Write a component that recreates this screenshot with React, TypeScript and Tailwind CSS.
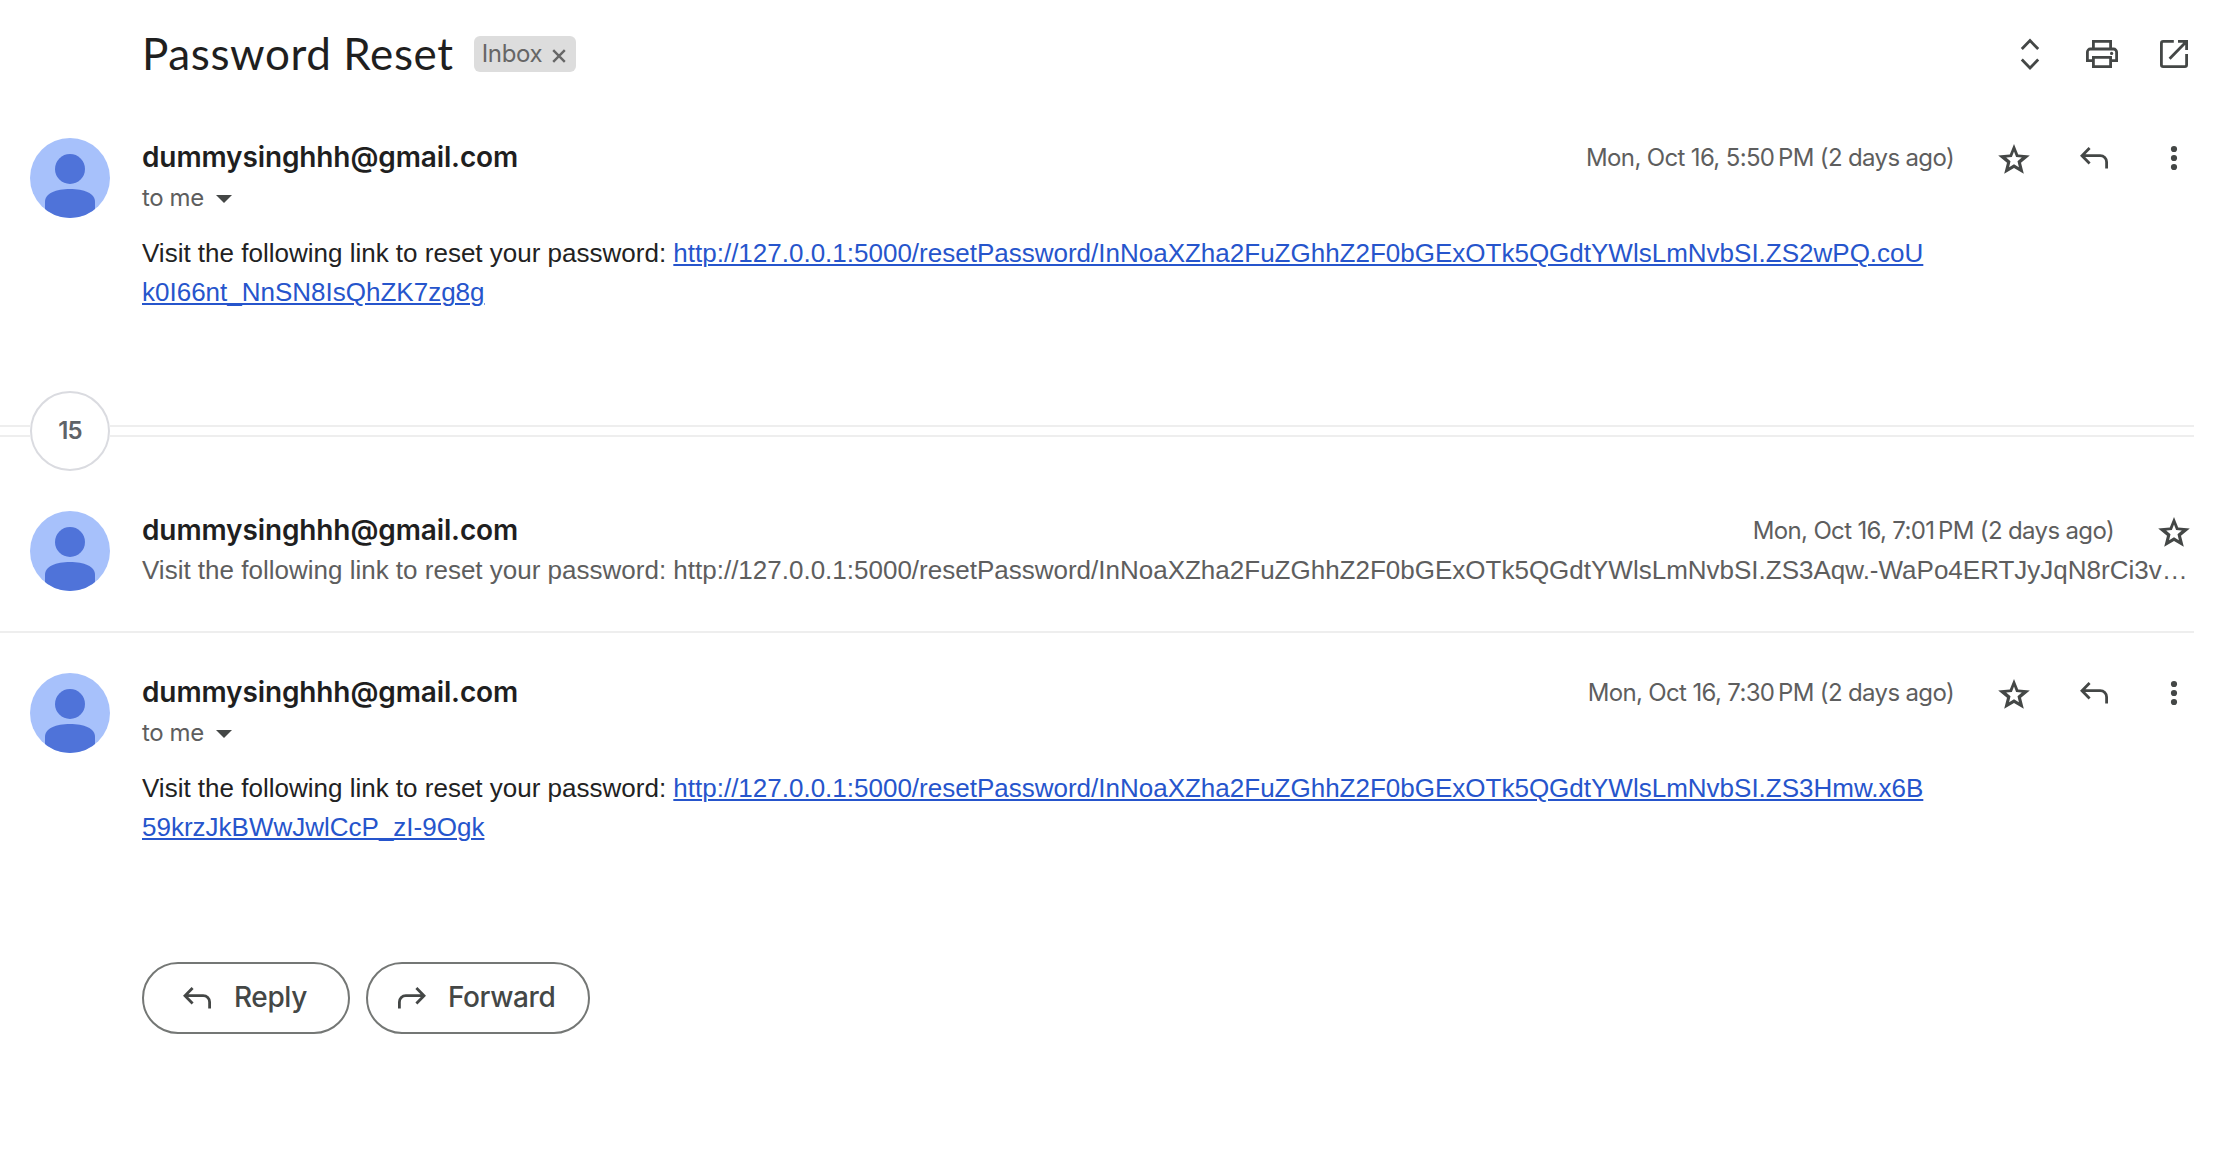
import type { ReactNode } from "react";

const BASE = "http://127.0.0.1:5000/resetPassword/InNoaXZha2FuZGhhZ2F0bGExOTk5QGdtYWlsLmNvbSI.";
const INTRO = "Visit the following link to reset your password: ";
const SENDER = "dummysinghhh@gmail.com";

function Icon({ children }: { children: ReactNode }) {
  return (
    <svg viewBox="0 0 40 40" className="size-10 shrink-0 text-[#444746]" fill="none" stroke="currentColor" strokeWidth="2.8">
      {children}
    </svg>
  );
}

function UnfoldIcon() {
  return (
    <Icon>
      <path d="M11.8 15 20 6.6 28.2 15M11.8 25.6 20 34l8.2-8.4" />
    </Icon>
  );
}

function PrintIcon() {
  return (
    <Icon>
      <path d="M11.4 14V7.4h17.2V14M11.4 26.6H5.4V18a3 3 0 0 1 3-3h23.2a3 3 0 0 1 3 3v8.6h-6M11.4 23.4h17.2v9.2H11.4z" />
      <circle cx="29.6" cy="19.4" r="1.6" fill="currentColor" stroke="none" />
    </Icon>
  );
}

function OpenIcon() {
  return (
    <Icon>
      <path d="M19.8 7.4H9.2a1.8 1.8 0 0 0-1.8 1.8v21.6a1.8 1.8 0 0 0 1.8 1.8h21.6a1.8 1.8 0 0 0 1.8-1.8V20M24 7.4h8.6V16M32.2 7.8 15.6 24.8" />
    </Icon>
  );
}

function StarIcon() {
  return (
    <Icon>
      <path
        fill="currentColor"
        fillRule="evenodd"
        stroke="none"
        d="M20 6 24.2 16.4 35.8 17.4 27 24.8 29.8 35.8 20 30 10.2 35.8 13 24.8 4.2 17.4 15.8 16.4ZM20 13.4 17.9 19.1 12.2 19.6 16.5 23.2 15.1 29.2 20 26.2 24.9 29.2 23.5 23.2 27.8 19.6 22.1 19.1Z"
      />
    </Icon>
  );
}

function ReplyIcon() {
  return (
    <Icon>
      <path d="M15.6 10 8 17.7l7.6 7.7M8.2 17.7h18a6.4 6.4 0 0 1 6.4 6.4v6.4" />
    </Icon>
  );
}

function ForwardIcon() {
  return (
    <Icon>
      <path d="M24.4 10l7.6 7.7-7.6 7.7M31.8 17.7h-18a6.4 6.4 0 0 0-6.4 6.4v6.4" />
    </Icon>
  );
}

function MoreIcon() {
  return (
    <Icon>
      <g fill="currentColor" stroke="none">
        <circle cx="20" cy="11" r="3.1" />
        <circle cx="20" cy="20" r="3.1" />
        <circle cx="20" cy="29" r="3.1" />
      </g>
    </Icon>
  );
}

function Avatar() {
  return (
    <svg viewBox="0 0 80 80" className="size-20 shrink-0 rounded-full bg-[#a7c1fb]">
      <circle cx="40" cy="31" r="15" fill="#4f73d9" />
      <path d="M15 80V64C15 55 26 51 40 51s25 4 25 13v16z" fill="#4f73d9" />
    </svg>
  );
}

function Message({ date, icons, sub, children }: { date: string; icons: ReactNode; sub: ReactNode; children?: ReactNode }) {
  return (
    <article className="flex w-[2194px] gap-8 pl-[30px]">
      <Avatar />
      <div className="min-w-0 flex-1">
        <div className="flex h-[38px] items-center justify-between">
          <h2 className="text-[28px] leading-[38px] font-semibold tracking-[-0.12px] text-[#1f1f1f]">{SENDER}</h2>
          <div className="mt-0.5 flex items-center gap-10">
            <time className="text-2xl leading-[38px] tracking-[-0.65px] whitespace-nowrap text-[#5e5e5e]">{date}</time>
            {icons}
          </div>
        </div>
        <div className="flex h-[42px] items-center">{sub}</div>
        {children}
      </div>
    </article>
  );
}

function OpenMessage({ date, links }: { date: string; links: [string, string] }) {
  return (
    <Message
      date={date}
      icons={
        <>
          <StarIcon />
          <ReplyIcon />
          <MoreIcon />
        </>
      }
      sub={
        <>
          <span className="mt-0.5 text-2xl tracking-[-0.4px] text-[#5e5e5e]">to me</span>
          <svg viewBox="0 0 16 8" className="mt-1 ml-3 h-2 w-4">
            <path d="M0 0h16L8 8z" fill="#444746" />
          </svg>
        </>
      }
    >
      <p className="mt-4 font-['Liberation_Sans',Arial,sans-serif] text-[26px] leading-[39px] whitespace-pre text-[#222]">
        {INTRO}
        <a href="#" className="text-[#2655cc] underline decoration-2 underline-offset-2">
          {links[0]}
          <br />
          {links[1]}
        </a>
      </p>
    </Message>
  );
}

export default function App() {
  return (
    <main className="h-[1164px] w-[2218px] overflow-hidden bg-white font-['Inter',sans-serif]">
      <header className="flex h-[108px] w-[2194px] items-center pl-[142px]">
        <h1 className="mb-[3px] font-['Lato',sans-serif] text-[44px] tracking-[0.6px] text-[#1f1f1f]">Password Reset</h1>
        <div className="ml-5 flex h-9 w-[102px] items-center rounded-md bg-[#ddd] pl-2 text-[#666]">
          <span className="text-2xl leading-9 tracking-[-0.3px]">Inbox</span>
          <svg viewBox="0 0 14 14" className="mt-[3px] ml-[10px] size-[14px]" fill="none" stroke="currentColor" strokeWidth="2.4">
            <path d="M1.2 1.2l11.6 11.6M12.8 1.2 1.2 12.8" />
          </svg>
        </div>
        <div className="ml-auto flex gap-8">
          <UnfoldIcon />
          <PrintIcon />
          <OpenIcon />
        </div>
      </header>

      <div className="pt-[30px]">
        <OpenMessage date={"Mon, Oct 16, 5:50\u202fPM (2 days ago)"} links={[BASE + "ZS2wPQ.coU", "k0I66nt_NnSN8IsQhZK7zg8g"]} />
      </div>

      <div className="mt-[79px] flex h-20 w-[2194px] items-center">
        <div className="h-3 w-[30px] border-y-2 border-[#eee]" />
        <div className="flex size-20 items-center justify-center rounded-full border-2 border-[#dadbe0] text-2xl font-semibold tracking-[-0.8px] text-[#5f6368]">15</div>
        <div className="h-3 flex-1 border-y-2 border-[#eee]" />
      </div>

      <div className="w-[2194px] border-b-2 border-[#eee] py-10">
        <Message
          date={"Mon, Oct 16, 7:01\u202fPM (2 days ago)"}
          icons={<StarIcon />}
          sub={
            <span className="font-['Liberation_Sans',Arial,sans-serif] text-[26px] whitespace-pre text-[#5e5e5e]">
              {INTRO + BASE + "ZS3Aqw.-WaPo4ERTJyJqN8rCi3v…"}
            </span>
          }
        />
      </div>

      <div className="pt-10">
        <OpenMessage date={"Mon, Oct 16, 7:30\u202fPM (2 days ago)"} links={[BASE + "ZS3Hmw.x6B", "59krzJkBWwJwlCcP_zI-9Ogk"]} />
      </div>

      <div className="mt-[115px] ml-[142px] flex gap-4 text-[28px] font-medium text-[#444746]">
        <button className="flex h-[72px] w-[208px] items-center rounded-full border-2 border-[#747775] pl-[33px] tracking-[-0.4px]">
          <ReplyIcon />
          <span className="mb-0.5 ml-[17px]">Reply</span>
        </button>
        <button className="flex h-[72px] w-[224px] items-center rounded-full border-2 border-[#747775] pl-6 tracking-[-0.4px]">
          <ForwardIcon />
          <span className="mb-0.5 ml-4">Forward</span>
        </button>
      </div>
    </main>
  );
}
